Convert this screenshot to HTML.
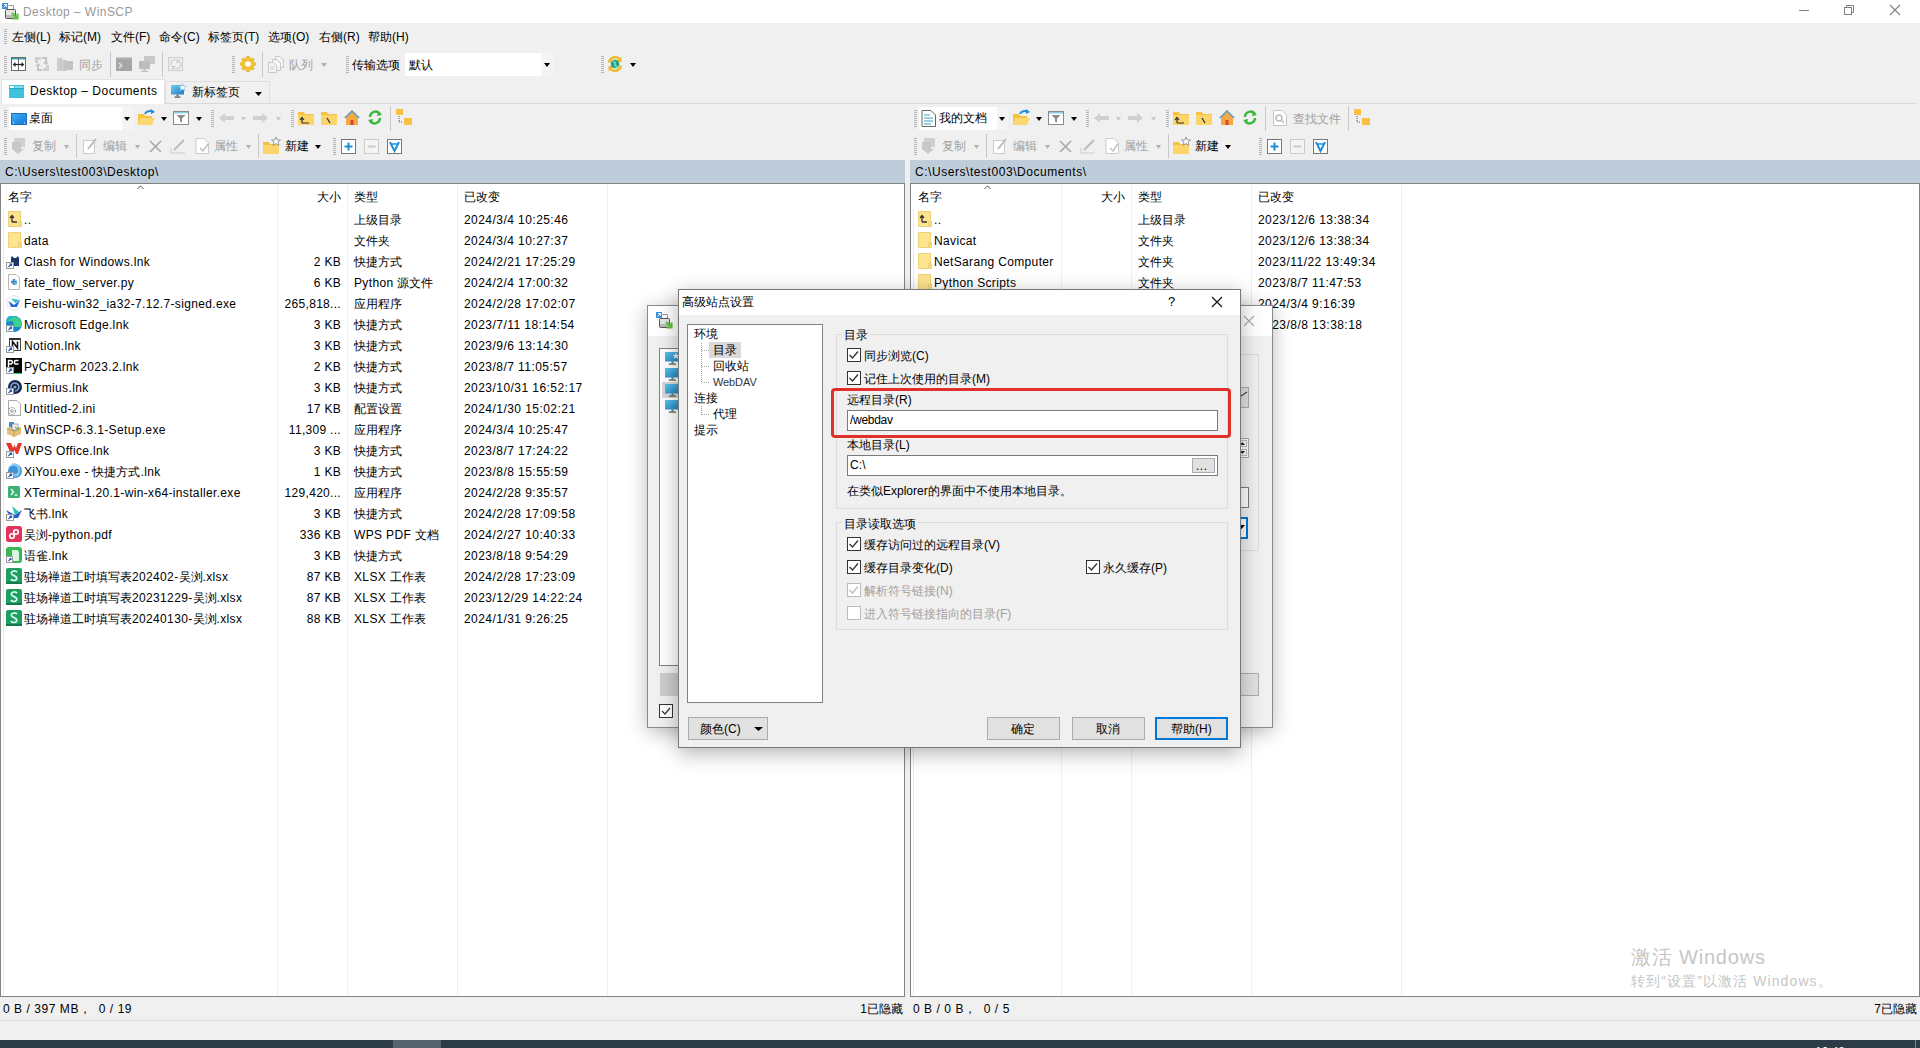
<!DOCTYPE html>
<html><head><meta charset="utf-8"><title>WinSCP</title>
<style>
html,body{margin:0;padding:0}
body{width:1920px;height:1048px;position:relative;overflow:hidden;background:#f0f0f0;font-family:"Liberation Sans",sans-serif;font-size:12px;color:#000}
.t{position:absolute;white-space:pre;line-height:16px;height:16px}
.r{position:absolute}
</style></head><body>
<div class="r" style="left:0px;top:0px;width:1920px;height:23px;background:#fff"></div>
<svg class="r" style="left:2px;top:3px" width="17" height="17" viewBox="0 0 17 17"><path d="M6.5 2.5H11.5V7.5" stroke="#999" fill="none"/><rect x="0" y="0" width="6" height="6" fill="#3d8fdb"/><path d="M1.5 4.5L4.5 1.5M2 1.5H4.5V4" stroke="#fff" stroke-width="0.9" fill="none"/><rect x="3.5" y="6.5" width="10" height="9" rx="1" fill="#e6e6e6" stroke="#555"/><rect x="4" y="12" width="9" height="3" fill="#bbb"/><path d="M10 10L15.5 15.5M15.5 10.5V15.5H10.5" stroke="#5cc23c" stroke-width="2.2" fill="none"/></svg>
<div class="t" style="left:23px;top:4.0px;color:#999;letter-spacing:0.45px;">Desktop – WinSCP</div>
<div class="r" style="left:1799px;top:10px;width:10px;height:1px;background:#808080"></div>
<svg class="r" style="left:1843px;top:4px" width="13" height="12" viewBox="0 0 13 12"><path d="M3.5 3.5V1.5H10.5V8.5H8.5" stroke="#808080" fill="none"/><rect x="1.5" y="3.5" width="7" height="7" stroke="#808080" fill="none"/></svg>
<svg class="r" style="left:1889px;top:4px" width="12" height="12" viewBox="0 0 12 12"><path d="M1 1L11 11M11 1L1 11" stroke="#808080" stroke-width="1.1"/></svg>
<div class="r" style="left:4px;top:29px;width:3px;height:15px;background:repeating-linear-gradient(#b4b4b4 0 1px,transparent 1px 2px)"></div>
<div class="t" style="left:12px;top:29.0px;color:#000;">左侧(L)</div>
<div class="t" style="left:59px;top:29.0px;color:#000;">标记(M)</div>
<div class="t" style="left:111px;top:29.0px;color:#000;">文件(F)</div>
<div class="t" style="left:159px;top:29.0px;color:#000;">命令(C)</div>
<div class="t" style="left:208px;top:29.0px;color:#000;">标签页(T)</div>
<div class="t" style="left:268px;top:29.0px;color:#000;">选项(O)</div>
<div class="t" style="left:319px;top:29.0px;color:#000;">右侧(R)</div>
<div class="t" style="left:368px;top:29.0px;color:#000;">帮助(H)</div>
<div class="r" style="left:4px;top:56px;width:3px;height:17px;background:repeating-linear-gradient(#b4b4b4 0 1px,transparent 1px 2px)"></div>
<svg class="r" style="left:11px;top:57px" width="15" height="14" viewBox="0 0 15 14"><rect x="0.5" y="0.5" width="14" height="13" fill="#fff" stroke="#6a6a6a"/><rect x="1" y="1" width="13" height="1.5" fill="#3aa6b9"/><path d="M7.5 1V13" stroke="#6a6a6a"/><path d="M2.5 7.5H12.5" stroke="#222" stroke-width="1.2"/><path d="M1.8 7.5L4.5 5V10Z M13.2 7.5L10.5 5V10Z" fill="#222"/></svg>
<svg class="r" style="left:34px;top:56px" width="16" height="16" viewBox="0 0 16 16"><path d="M1 1H7V4H4V7H1Z M15 15H9V12H12V9H15Z" fill="#cfcfcf"/><path d="M8 1H13V6H15L12 9L9 6H11V3H8Z" fill="#c4c4c4"/><path d="M8 15H3V10H1L4 7L7 10H5V13H8Z" fill="#c4c4c4"/></svg>
<svg class="r" style="left:57px;top:57px" width="16" height="15" viewBox="0 0 16 15"><path d="M0 1H5L6 3H10V14H0Z" fill="#cdcdcd"/><path d="M7 4H16V13H7Z" fill="#c4c4c4"/></svg>
<div class="t" style="left:79px;top:57.0px;color:#a0a0a0;">同步</div>
<div class="r" style="left:110px;top:52px;width:1px;height:25px;background:#c8c8c8"></div>
<svg class="r" style="left:116px;top:57px" width="16" height="14" viewBox="0 0 16 14"><rect x="0" y="0" width="16" height="14" fill="#a6a6a6"/><rect x="0" y="0" width="16" height="1.5" fill="#c6c6c6"/><path d="M3 6L6 8.5L3 11" stroke="#e8e8e8" stroke-width="1.2" fill="none"/></svg>
<svg class="r" style="left:139px;top:56px" width="16" height="16" viewBox="0 0 16 16"><rect x="5" y="0" width="11" height="8" fill="#c8c8c8"/><rect x="0" y="5" width="11" height="8" fill="#bdbdbd"/><rect x="4.5" y="13" width="2" height="1.5" fill="#bdbdbd"/><rect x="2" y="14.5" width="7" height="1.5" fill="#c4c4c4"/></svg>
<div class="r" style="left:162px;top:52px;width:1px;height:25px;background:#c8c8c8"></div>
<svg class="r" style="left:168px;top:57px" width="16" height="15" viewBox="0 0 16 15"><rect x="0.5" y="0.5" width="14" height="13" fill="none" stroke="#cfcfcf" stroke-width="1.2"/><path d="M3.5 9A4.5 4 0 0 1 11 4.5M11 2V5H8M12 5.5A4.5 4 0 0 1 4.5 10M4.5 12.5V9.5H7.5" stroke="#c8c8c8" fill="none" stroke-width="1.1"/></svg>
<div class="r" style="left:232px;top:56px;width:3px;height:17px;background:repeating-linear-gradient(#b4b4b4 0 1px,transparent 1px 2px)"></div>
<svg class="r" style="left:240px;top:56px" width="16" height="16" viewBox="0 0 16 16"><path d="M13.86 6.69 L15.69 6.68 L15.69 9.32 L13.86 9.31 L13.54 10.30 L13.07 11.21 L14.37 12.50 L12.50 14.37 L11.21 13.07 L10.30 13.54 L9.31 13.86 L9.32 15.69 L6.68 15.69 L6.69 13.86 L5.70 13.54 L4.79 13.07 L3.50 14.37 L1.63 12.50 L2.93 11.21 L2.46 10.30 L2.14 9.31 L0.31 9.32 L0.31 6.68 L2.14 6.69 L2.46 5.70 L2.93 4.79 L1.63 3.50 L3.50 1.63 L4.79 2.93 L5.70 2.46 L6.69 2.14 L6.68 0.31 L9.32 0.31 L9.31 2.14 L10.30 2.46 L11.21 2.93 L12.50 1.63 L14.37 3.50 L13.07 4.79 L13.54 5.70Z" fill="#f2c233" stroke="#e0a81c" stroke-width="0.6"/><circle cx="8" cy="8" r="2.8" fill="#fff"/></svg>
<div class="r" style="left:262px;top:52px;width:1px;height:25px;background:#c8c8c8"></div>
<svg class="r" style="left:268px;top:56px" width="16" height="17" viewBox="0 0 16 17"><path d="M7.5 0.5H12L15.5 4V11.5H7.5Z" fill="#f4f4f4" stroke="#c8c8c8"/><path d="M4.5 3.5H9L12.5 7V14.5H4.5Z" fill="#f4f4f4" stroke="#c8c8c8"/><path d="M0.5 6.5H5L8.5 10V16.5H0.5Z" fill="#f4f4f4" stroke="#c8c8c8"/><path d="M2 11H6M2 13H6" stroke="#ccc"/></svg>
<div class="t" style="left:289px;top:57.0px;color:#a0a0a0;">队列</div>
<svg class="r" style="left:321px;top:63px" width="6" height="4" viewBox="0 0 6 4"><path d="M0 0H6L3.0 4Z" fill="#b0b0b0"/></svg>
<div class="r" style="left:346px;top:56px;width:3px;height:17px;background:repeating-linear-gradient(#b4b4b4 0 1px,transparent 1px 2px)"></div>
<div class="t" style="left:352px;top:57.0px;color:#000;">传输选项</div>
<div class="r" style="left:405px;top:53px;width:148px;height:23px;background:#fff"></div>
<div class="r" style="left:541px;top:53px;width:12px;height:23px;background:#f4f4f4"></div>
<svg class="r" style="left:544px;top:63px" width="6" height="4" viewBox="0 0 6 4"><path d="M0 0H6L3.0 4Z" fill="#000"/></svg>
<div class="t" style="left:409px;top:57.0px;color:#000;">默认</div>
<div class="r" style="left:601px;top:56px;width:3px;height:17px;background:repeating-linear-gradient(#b4b4b4 0 1px,transparent 1px 2px)"></div>
<svg class="r" style="left:606px;top:55px" width="18" height="18" viewBox="0 0 18 18"><path d="M3.2 7.5A6 6 0 0 1 13.5 4.2" stroke="#f1b92e" stroke-width="2.6" fill="none"/><path d="M15.5 1.5V7H10Z" fill="#f1b92e"/><path d="M14.8 10.5A6 6 0 0 1 4.5 13.8" stroke="#f1b92e" stroke-width="2.6" fill="none"/><path d="M2.5 16.5V11H8Z" fill="#f1b92e"/><circle cx="9" cy="9" r="4.3" fill="#2aa16a"/><path d="M7 6.5Q9.5 7 9 9T11.5 12" stroke="#5fd0d8" stroke-width="2" fill="none"/></svg>
<svg class="r" style="left:630px;top:63px" width="6" height="4" viewBox="0 0 6 4"><path d="M0 0H6L3.0 4Z" fill="#000"/></svg>
<div class="r" style="left:0px;top:103px;width:1917px;height:1px;background:#d9d9d9"></div>
<div class="r" style="left:1px;top:79px;width:164px;height:25px;background:#fff;border:1px solid #e3e3e3;border-bottom:none;box-sizing:border-box"></div>
<svg class="r" style="left:9px;top:85px" width="15" height="13" viewBox="0 0 15 13"><rect x="0" y="0" width="15" height="13" fill="#3dc3dd"/><rect x="1" y="1" width="4" height="2" fill="#fff"/><rect x="6" y="1" width="8" height="2" fill="#7fdcec"/><rect x="0" y="3" width="15" height="1" fill="#2aa8c0"/></svg>
<div class="t" style="left:30px;top:83.0px;color:#000;letter-spacing:0.5px;">Desktop – Documents</div>
<div class="r" style="left:165px;top:81px;width:105px;height:22px;background:#f0f0f0;border:1px solid #dedede;border-bottom:none;box-sizing:border-box"></div>
<svg class="r" style="left:171px;top:83px" width="16" height="16" viewBox="0 0 16 16"><defs><linearGradient id="tg" x1="0" y1="0" x2="1" y2="1"><stop offset="0" stop-color="#6fd0f0"/><stop offset="1" stop-color="#1a7cc2"/></linearGradient></defs><rect x="0" y="2" width="13" height="9.5" fill="url(#tg)"/><rect x="5.5" y="11.5" width="2" height="2" fill="#666"/><rect x="3.5" y="13.5" width="6" height="1.2" fill="#555"/><path d="M11.5 0.5L12.6 3.2H15.5L13.2 5L14 7.8L11.5 6.2L9 7.8L9.8 5L7.5 3.2H10.4Z" fill="#fff" stroke="#7ab6da" stroke-width="0.6"/></svg>
<div class="t" style="left:192px;top:84.0px;color:#000;">新标签页</div>
<svg class="r" style="left:255px;top:92px" width="7" height="4" viewBox="0 0 7 4"><path d="M0 0H7L3.5 4Z" fill="#000"/></svg>
<div class="r" style="left:4px;top:110px;width:3px;height:17px;background:repeating-linear-gradient(#b4b4b4 0 1px,transparent 1px 2px)"></div>
<div class="r" style="left:9px;top:107px;width:124px;height:23px;background:#fff"></div>
<div class="r" style="left:122px;top:107px;width:11px;height:23px;background:#f4f4f4"></div>
<svg class="r" style="left:124px;top:117px" width="6" height="4" viewBox="0 0 6 4"><path d="M0 0H6L3.0 4Z" fill="#000"/></svg>
<svg class="r" style="left:11px;top:113px" width="16" height="12" viewBox="0 0 16 12"><defs><linearGradient id="dg" x1="0" y1="0" x2="1" y2="1"><stop offset="0" stop-color="#3fb0f5"/><stop offset="1" stop-color="#1477d6"/></linearGradient></defs><rect x="0.5" y="0.5" width="15" height="11" fill="url(#dg)" stroke="#1a6fc0"/><path d="M2 10H3M13 10H14" stroke="#fff"/></svg>
<div class="t" style="left:29px;top:110.0px;color:#000;">桌面</div>
<svg class="r" style="left:137px;top:109px" width="19" height="17" viewBox="0 0 19 17"><path d="M1 5H7L8 7H15V16H1Z" fill="#f5c242"/><path d="M3 9H18L15 16H1Z" fill="#fbd872"/><path d="M8 5A5 4 0 0 1 16 3" stroke="#1c8fd6" stroke-width="2" fill="none"/><path d="M14 0L18 3L14 5Z" fill="#1c8fd6"/></svg>
<svg class="r" style="left:161px;top:117px" width="6" height="4" viewBox="0 0 6 4"><path d="M0 0H6L3.0 4Z" fill="#000"/></svg>
<svg class="r" style="left:173px;top:111px" width="16" height="14" viewBox="0 0 16 14"><rect x="0.5" y="0.5" width="15" height="13" fill="#fff" stroke="#8a8a8a"/><rect x="1" y="1" width="14" height="1.5" fill="#8fd0e0"/><path d="M3.5 4H12.5L9 7.5V11.5L7 10.5V7.5Z" fill="#8a8a8a"/></svg>
<svg class="r" style="left:196px;top:117px" width="6" height="4" viewBox="0 0 6 4"><path d="M0 0H6L3.0 4Z" fill="#000"/></svg>
<div class="r" style="left:211px;top:110px;width:3px;height:17px;background:repeating-linear-gradient(#b4b4b4 0 1px,transparent 1px 2px)"></div>
<svg class="r" style="left:219px;top:113px" width="15" height="10" viewBox="0 0 15 10"><path d="M0 5L6 0V3H15V7H6V10Z" fill="#d0d0d0"/></svg>
<svg class="r" style="left:241px;top:117px" width="5" height="4" viewBox="0 0 5 4"><path d="M0 0H5L2.5 4Z" fill="#c8c8c8"/></svg>
<svg class="r" style="left:253px;top:113px" width="15" height="10" viewBox="0 0 15 10"><path d="M15 5L9 0V3H0V7H9V10Z" fill="#d0d0d0"/></svg>
<svg class="r" style="left:276px;top:117px" width="5" height="4" viewBox="0 0 5 4"><path d="M0 0H5L2.5 4Z" fill="#c8c8c8"/></svg>
<div class="r" style="left:291px;top:110px;width:3px;height:17px;background:repeating-linear-gradient(#b4b4b4 0 1px,transparent 1px 2px)"></div>
<svg class="r" style="left:298px;top:110px" width="16" height="16" viewBox="0 0 16 16"><path d="M0 2H6L7 4H16V15H0Z" fill="#f5c242"/><rect x="0" y="5" width="16" height="10" fill="#fbd46a"/><path d="M4 13V8M2 10L4 7.5L6 10M4 13H11" stroke="#333" stroke-width="1.2" fill="none"/></svg>
<svg class="r" style="left:321px;top:110px" width="16" height="16" viewBox="0 0 16 16"><path d="M0 2H6L7 4H16V15H0Z" fill="#f5c242"/><rect x="0" y="5" width="16" height="10" fill="#fbd46a"/><path d="M6 8L9 13" stroke="#333" stroke-width="1.3"/></svg>
<svg class="r" style="left:344px;top:109px" width="16" height="17" viewBox="0 0 16 17"><path d="M8 1L0 9H2V16H14V9H16Z" fill="#f5a742"/><path d="M8 1L0 9H2L8 3L14 9H16Z" fill="#5a9fd4"/><rect x="6.5" y="11" width="3" height="5" fill="#d9462e"/></svg>
<svg class="r" style="left:367px;top:109px" width="16" height="17" viewBox="0 0 16 17"><path d="M3 8A5.5 5.5 0 0 1 13 5" stroke="#3cb83c" stroke-width="2.5" fill="none"/><path d="M13 9A5.5 5.5 0 0 1 3 12" stroke="#3cb83c" stroke-width="2.5" fill="none"/><path d="M11 2L15 6L10 7Z M5 15L1 11L6 10Z" fill="#3cb83c"/></svg>
<div class="r" style="left:390px;top:106px;width:1px;height:25px;background:#c8c8c8"></div>
<svg class="r" style="left:396px;top:109px" width="17" height="17" viewBox="0 0 17 17"><rect x="0" y="0" width="7" height="6" fill="#f5c242"/><rect x="8" y="9" width="8" height="7" fill="#f5c242"/><path d="M3 7V13H7" stroke="#555" stroke-dasharray="1 1" fill="none"/></svg>
<div class="r" style="left:4px;top:138px;width:3px;height:17px;background:repeating-linear-gradient(#b4b4b4 0 1px,transparent 1px 2px)"></div>
<svg class="r" style="left:11px;top:138px" width="17" height="16" viewBox="0 0 17 16"><rect x="3" y="0" width="11" height="9" fill="#d0d0d0"/><path d="M1 4H10V11H13L7 16L1 11Z" fill="#c8c8c8"/></svg>
<div class="t" style="left:32px;top:138.0px;color:#a0a0a0;">复制</div>
<svg class="r" style="left:64px;top:145px" width="5" height="4" viewBox="0 0 5 4"><path d="M0 0H5L2.5 4Z" fill="#b0b0b0"/></svg>
<div class="r" style="left:76px;top:134px;width:1px;height:24px;background:#c8c8c8"></div>
<svg class="r" style="left:83px;top:138px" width="15" height="16" viewBox="0 0 15 16"><rect x="0.5" y="2.5" width="11" height="13" fill="#fff" stroke="#ccc"/><path d="M5 11L13 1" stroke="#bbb" stroke-width="2"/></svg>
<div class="t" style="left:103px;top:138.0px;color:#a0a0a0;">编辑</div>
<svg class="r" style="left:135px;top:145px" width="5" height="4" viewBox="0 0 5 4"><path d="M0 0H5L2.5 4Z" fill="#b0b0b0"/></svg>
<svg class="r" style="left:149px;top:140px" width="13" height="13" viewBox="0 0 13 13"><path d="M1 1L12 12M12 1L1 12" stroke="#a8a8a8" stroke-width="1.6"/></svg>
<svg class="r" style="left:170px;top:138px" width="16" height="16" viewBox="0 0 16 16"><path d="M1 10V15H15" stroke="#ccc" fill="none"/><path d="M4 12L14 2" stroke="#bbb" stroke-width="2"/></svg>
<svg class="r" style="left:195px;top:138px" width="16" height="16" viewBox="0 0 16 16"><path d="M1 0.5H9L13.5 5V15.5H1Z" fill="#fff" stroke="#ccc"/><path d="M5 10L8 13L13 6" stroke="#bbb" fill="none" stroke-width="1.3"/></svg>
<div class="t" style="left:214px;top:138.0px;color:#a0a0a0;">属性</div>
<svg class="r" style="left:246px;top:145px" width="5" height="4" viewBox="0 0 5 4"><path d="M0 0H5L2.5 4Z" fill="#b0b0b0"/></svg>
<div class="r" style="left:258px;top:134px;width:1px;height:24px;background:#c8c8c8"></div>
<svg class="r" style="left:263px;top:137px" width="18" height="17" viewBox="0 0 18 17"><path d="M0 5H6L7 7H16V17H0Z" fill="#f5c242"/><rect x="0" y="8" width="16" height="9" fill="#fbd46a"/><path d="M13 0L14.2 3H17.5L15 5L16 8.5L13 6.5L10 8.5L11 5L8.5 3H11.8Z" fill="#fff" stroke="#888" stroke-width="0.8"/></svg>
<div class="t" style="left:285px;top:138.0px;color:#000;">新建</div>
<svg class="r" style="left:315px;top:145px" width="6" height="4" viewBox="0 0 6 4"><path d="M0 0H6L3.0 4Z" fill="#000"/></svg>
<div class="r" style="left:333px;top:138px;width:3px;height:17px;background:repeating-linear-gradient(#b4b4b4 0 1px,transparent 1px 2px)"></div>
<svg class="r" style="left:341px;top:139px" width="15" height="15" viewBox="0 0 15 15"><rect x="0.5" y="0.5" width="14" height="14" fill="#fff" stroke="#777"/><path d="M7.5 3.5V11.5M3.5 7.5H11.5" stroke="#1c8fd6" stroke-width="2"/></svg>
<svg class="r" style="left:364px;top:139px" width="15" height="15" viewBox="0 0 15 15"><rect x="0.5" y="0.5" width="14" height="14" fill="#f4f4f4" stroke="#ccc"/><path d="M3.5 7.5H11.5" stroke="#ccc" stroke-width="2"/></svg>
<svg class="r" style="left:387px;top:139px" width="15" height="15" viewBox="0 0 15 15"><rect x="0.5" y="0.5" width="14" height="14" fill="#fff" stroke="#777"/><path d="M3 3L7.5 12L12 3" stroke="#1c8fd6" stroke-width="2" fill="none"/><path d="M5 5H10" stroke="#1c8fd6" stroke-width="1.5"/></svg>
<div class="r" style="left:914px;top:110px;width:3px;height:17px;background:repeating-linear-gradient(#b4b4b4 0 1px,transparent 1px 2px)"></div>
<div class="r" style="left:919px;top:107px;width:89px;height:23px;background:#fff"></div>
<div class="r" style="left:997px;top:107px;width:11px;height:23px;background:#f4f4f4"></div>
<svg class="r" style="left:999px;top:117px" width="6" height="4" viewBox="0 0 6 4"><path d="M0 0H6L3.0 4Z" fill="#000"/></svg>
<svg class="r" style="left:921px;top:110px" width="15" height="17" viewBox="0 0 15 17"><path d="M1 0.5H10L14.5 5V16.5H1Z" fill="#fff" stroke="#666"/><path d="M3 5H9M3 8H12M3 11H12M3 14H10" stroke="#3aa0c8" stroke-width="1.2"/></svg>
<div class="t" style="left:939px;top:110.0px;color:#000;">我的文档</div>
<svg class="r" style="left:1012px;top:109px" width="19" height="17" viewBox="0 0 19 17"><path d="M1 5H7L8 7H15V16H1Z" fill="#f5c242"/><path d="M3 9H18L15 16H1Z" fill="#fbd872"/><path d="M8 5A5 4 0 0 1 16 3" stroke="#1c8fd6" stroke-width="2" fill="none"/><path d="M14 0L18 3L14 5Z" fill="#1c8fd6"/></svg>
<svg class="r" style="left:1036px;top:117px" width="6" height="4" viewBox="0 0 6 4"><path d="M0 0H6L3.0 4Z" fill="#000"/></svg>
<svg class="r" style="left:1048px;top:111px" width="16" height="14" viewBox="0 0 16 14"><rect x="0.5" y="0.5" width="15" height="13" fill="#fff" stroke="#8a8a8a"/><rect x="1" y="1" width="14" height="1.5" fill="#8fd0e0"/><path d="M3.5 4H12.5L9 7.5V11.5L7 10.5V7.5Z" fill="#8a8a8a"/></svg>
<svg class="r" style="left:1071px;top:117px" width="6" height="4" viewBox="0 0 6 4"><path d="M0 0H6L3.0 4Z" fill="#000"/></svg>
<div class="r" style="left:1086px;top:110px;width:3px;height:17px;background:repeating-linear-gradient(#b4b4b4 0 1px,transparent 1px 2px)"></div>
<svg class="r" style="left:1094px;top:113px" width="15" height="10" viewBox="0 0 15 10"><path d="M0 5L6 0V3H15V7H6V10Z" fill="#d0d0d0"/></svg>
<svg class="r" style="left:1116px;top:117px" width="5" height="4" viewBox="0 0 5 4"><path d="M0 0H5L2.5 4Z" fill="#c8c8c8"/></svg>
<svg class="r" style="left:1128px;top:113px" width="15" height="10" viewBox="0 0 15 10"><path d="M15 5L9 0V3H0V7H9V10Z" fill="#d0d0d0"/></svg>
<svg class="r" style="left:1151px;top:117px" width="5" height="4" viewBox="0 0 5 4"><path d="M0 0H5L2.5 4Z" fill="#c8c8c8"/></svg>
<div class="r" style="left:1166px;top:110px;width:3px;height:17px;background:repeating-linear-gradient(#b4b4b4 0 1px,transparent 1px 2px)"></div>
<svg class="r" style="left:1173px;top:110px" width="16" height="16" viewBox="0 0 16 16"><path d="M0 2H6L7 4H16V15H0Z" fill="#f5c242"/><rect x="0" y="5" width="16" height="10" fill="#fbd46a"/><path d="M4 13V8M2 10L4 7.5L6 10M4 13H11" stroke="#333" stroke-width="1.2" fill="none"/></svg>
<svg class="r" style="left:1196px;top:110px" width="16" height="16" viewBox="0 0 16 16"><path d="M0 2H6L7 4H16V15H0Z" fill="#f5c242"/><rect x="0" y="5" width="16" height="10" fill="#fbd46a"/><path d="M6 8L9 13" stroke="#333" stroke-width="1.3"/></svg>
<svg class="r" style="left:1219px;top:109px" width="16" height="17" viewBox="0 0 16 17"><path d="M8 1L0 9H2V16H14V9H16Z" fill="#f5a742"/><path d="M8 1L0 9H2L8 3L14 9H16Z" fill="#5a9fd4"/><rect x="6.5" y="11" width="3" height="5" fill="#d9462e"/></svg>
<svg class="r" style="left:1242px;top:109px" width="16" height="17" viewBox="0 0 16 17"><path d="M3 8A5.5 5.5 0 0 1 13 5" stroke="#3cb83c" stroke-width="2.5" fill="none"/><path d="M13 9A5.5 5.5 0 0 1 3 12" stroke="#3cb83c" stroke-width="2.5" fill="none"/><path d="M11 2L15 6L10 7Z M5 15L1 11L6 10Z" fill="#3cb83c"/></svg>
<div class="r" style="left:1265px;top:106px;width:1px;height:25px;background:#c8c8c8"></div>
<svg class="r" style="left:1272px;top:110px" width="16" height="16" viewBox="0 0 16 16"><path d="M1.5 0.5H10L14.5 5V15.5H1.5Z" fill="#fff" stroke="#c4c4c4"/><circle cx="7" cy="8" r="3" fill="none" stroke="#bbb" stroke-width="1.5"/><path d="M9 10L12 13" stroke="#bbb" stroke-width="1.5"/></svg>
<div class="t" style="left:1293px;top:111.0px;color:#a0a0a0;">查找文件</div>
<div class="r" style="left:1348px;top:106px;width:1px;height:25px;background:#c8c8c8"></div>
<svg class="r" style="left:1354px;top:109px" width="17" height="17" viewBox="0 0 17 17"><rect x="0" y="0" width="7" height="6" fill="#f5c242"/><rect x="8" y="9" width="8" height="7" fill="#f5c242"/><path d="M3 7V13H7" stroke="#555" stroke-dasharray="1 1" fill="none"/></svg>
<div class="r" style="left:914px;top:138px;width:3px;height:17px;background:repeating-linear-gradient(#b4b4b4 0 1px,transparent 1px 2px)"></div>
<svg class="r" style="left:921px;top:138px" width="17" height="16" viewBox="0 0 17 16"><rect x="3" y="0" width="11" height="9" fill="#d0d0d0"/><path d="M1 4H10V11H13L7 16L1 11Z" fill="#c8c8c8"/></svg>
<div class="t" style="left:942px;top:138.0px;color:#a0a0a0;">复制</div>
<svg class="r" style="left:974px;top:145px" width="5" height="4" viewBox="0 0 5 4"><path d="M0 0H5L2.5 4Z" fill="#b0b0b0"/></svg>
<div class="r" style="left:986px;top:134px;width:1px;height:24px;background:#c8c8c8"></div>
<svg class="r" style="left:993px;top:138px" width="15" height="16" viewBox="0 0 15 16"><rect x="0.5" y="2.5" width="11" height="13" fill="#fff" stroke="#ccc"/><path d="M5 11L13 1" stroke="#bbb" stroke-width="2"/></svg>
<div class="t" style="left:1013px;top:138.0px;color:#a0a0a0;">编辑</div>
<svg class="r" style="left:1045px;top:145px" width="5" height="4" viewBox="0 0 5 4"><path d="M0 0H5L2.5 4Z" fill="#b0b0b0"/></svg>
<svg class="r" style="left:1059px;top:140px" width="13" height="13" viewBox="0 0 13 13"><path d="M1 1L12 12M12 1L1 12" stroke="#a8a8a8" stroke-width="1.6"/></svg>
<svg class="r" style="left:1080px;top:138px" width="16" height="16" viewBox="0 0 16 16"><path d="M1 10V15H15" stroke="#ccc" fill="none"/><path d="M4 12L14 2" stroke="#bbb" stroke-width="2"/></svg>
<svg class="r" style="left:1105px;top:138px" width="16" height="16" viewBox="0 0 16 16"><path d="M1 0.5H9L13.5 5V15.5H1Z" fill="#fff" stroke="#ccc"/><path d="M5 10L8 13L13 6" stroke="#bbb" fill="none" stroke-width="1.3"/></svg>
<div class="t" style="left:1124px;top:138.0px;color:#a0a0a0;">属性</div>
<svg class="r" style="left:1156px;top:145px" width="5" height="4" viewBox="0 0 5 4"><path d="M0 0H5L2.5 4Z" fill="#b0b0b0"/></svg>
<div class="r" style="left:1168px;top:134px;width:1px;height:24px;background:#c8c8c8"></div>
<svg class="r" style="left:1173px;top:137px" width="18" height="17" viewBox="0 0 18 17"><path d="M0 5H6L7 7H16V17H0Z" fill="#f5c242"/><rect x="0" y="8" width="16" height="9" fill="#fbd46a"/><path d="M13 0L14.2 3H17.5L15 5L16 8.5L13 6.5L10 8.5L11 5L8.5 3H11.8Z" fill="#fff" stroke="#888" stroke-width="0.8"/></svg>
<div class="t" style="left:1195px;top:138.0px;color:#000;">新建</div>
<svg class="r" style="left:1225px;top:145px" width="6" height="4" viewBox="0 0 6 4"><path d="M0 0H6L3.0 4Z" fill="#000"/></svg>
<div class="r" style="left:1259px;top:138px;width:3px;height:17px;background:repeating-linear-gradient(#b4b4b4 0 1px,transparent 1px 2px)"></div>
<svg class="r" style="left:1267px;top:139px" width="15" height="15" viewBox="0 0 15 15"><rect x="0.5" y="0.5" width="14" height="14" fill="#fff" stroke="#777"/><path d="M7.5 3.5V11.5M3.5 7.5H11.5" stroke="#1c8fd6" stroke-width="2"/></svg>
<svg class="r" style="left:1290px;top:139px" width="15" height="15" viewBox="0 0 15 15"><rect x="0.5" y="0.5" width="14" height="14" fill="#f4f4f4" stroke="#ccc"/><path d="M3.5 7.5H11.5" stroke="#ccc" stroke-width="2"/></svg>
<svg class="r" style="left:1313px;top:139px" width="15" height="15" viewBox="0 0 15 15"><rect x="0.5" y="0.5" width="14" height="14" fill="#fff" stroke="#777"/><path d="M3 3L7.5 12L12 3" stroke="#1c8fd6" stroke-width="2" fill="none"/><path d="M5 5H10" stroke="#1c8fd6" stroke-width="1.5"/></svg>
<div class="r" style="left:0px;top:160px;width:905px;height:23px;background:#bfcddb"></div>
<div class="t" style="left:5px;top:164.0px;color:#000;letter-spacing:0.55px;">C:\Users\test003\Desktop\</div>
<div class="r" style="left:0px;top:183px;width:905px;height:814px;background:#fff;border:1px solid #828282;box-sizing:border-box"></div>
<div class="r" style="left:277px;top:185px;width:1px;height:811px;background:#efefef"></div>
<div class="r" style="left:347px;top:185px;width:1px;height:811px;background:#efefef"></div>
<div class="r" style="left:457px;top:185px;width:1px;height:811px;background:#efefef"></div>
<div class="r" style="left:607px;top:185px;width:1px;height:811px;background:#efefef"></div>
<div class="r" style="left:3px;top:209px;width:1px;height:787px;background:#e6e9ed"></div>
<div class="t" style="left:8px;top:189.0px;color:#000;">名字</div>
<svg class="r" style="left:137px;top:185px" width="8" height="5" viewBox="0 0 8 5"><path d="M0.5 4L3.5 0.8L6.5 4" stroke="#555" stroke-width="1" fill="none"/></svg>
<div class="t" style="right:1579px;top:189.0px;color:#000;text-align:right;">大小</div>
<div class="t" style="left:354px;top:189.0px;color:#000;">类型</div>
<div class="t" style="left:464px;top:189.0px;color:#000;">已改变</div>
<svg class="r" style="left:6px;top:211px" width="16" height="16" viewBox="0 0 16 16"><path d="M2.5 0.5H14.5V15.5H2.5Z" fill="#fde38e" stroke="#ecd27a"/><path d="M12.5 10.5H15.5V15.5H12.5Z" fill="#f7d97a" stroke="#ecd27a"/><path d="M6 11V5M4 7L6 4.5L8 7M6 11H11" stroke="#333" stroke-width="1.3" fill="none"/></svg>
<div class="t" style="left:24px;top:211.5px;color:#000;letter-spacing:0.35px;">..</div>
<div class="t" style="left:354px;top:211.5px;color:#000;letter-spacing:0.35px;"><span style="letter-spacing:0">上级目录</span></div>
<div class="t" style="left:464px;top:211.5px;color:#000;letter-spacing:0.45px;">2024/3/4 10:25:46</div>
<svg class="r" style="left:6px;top:232px" width="16" height="16" viewBox="0 0 16 16"><path d="M2.5 0.5H14.5V15.5H2.5Z" fill="#fde38e" stroke="#ecd27a"/><path d="M12.5 10.5H15.5V15.5H12.5Z" fill="#f7d97a" stroke="#ecd27a"/></svg>
<div class="t" style="left:24px;top:232.5px;color:#000;letter-spacing:0.35px;">data</div>
<div class="t" style="left:354px;top:232.5px;color:#000;letter-spacing:0.35px;"><span style="letter-spacing:0">文件夹</span></div>
<div class="t" style="left:464px;top:232.5px;color:#000;letter-spacing:0.45px;">2024/3/4 10:27:37</div>
<svg class="r" style="left:6px;top:253px" width="16" height="16" viewBox="0 0 16 16"><path d="M5 5L6 3L8 5H10L12 3L13 5V13H5Z" fill="#1f3468"/><rect x="0.5" y="9.5" width="7" height="6" fill="#fff" stroke="#9a9a9a"/><path d="M2.5 14L5.5 11M3.5 11H5.5V13" stroke="#1c5fb8" stroke-width="1.2" fill="none"/></svg>
<div class="t" style="left:24px;top:253.5px;color:#000;letter-spacing:0.35px;">Clash for Windows.lnk</div>
<div class="t" style="right:1579px;top:253.5px;color:#000;text-align:right;letter-spacing:0.3px;">2 KB</div>
<div class="t" style="left:354px;top:253.5px;color:#000;letter-spacing:0.35px;"><span style="letter-spacing:0">快捷方式</span></div>
<div class="t" style="left:464px;top:253.5px;color:#000;letter-spacing:0.45px;">2024/2/21 17:25:29</div>
<svg class="r" style="left:6px;top:274px" width="16" height="16" viewBox="0 0 16 16"><path d="M2.5 0.5H10L13.5 4V15.5H2.5Z" fill="#fff" stroke="#b8b8b8"/><path d="M5 8H11M8 5V11" stroke="#4a8ac4" stroke-width="2.5"/><circle cx="9.5" cy="9.5" r="1.5" fill="#6fb6d9"/></svg>
<div class="t" style="left:24px;top:274.5px;color:#000;letter-spacing:0.35px;">fate_flow_server.py</div>
<div class="t" style="right:1579px;top:274.5px;color:#000;text-align:right;letter-spacing:0.3px;">6 KB</div>
<div class="t" style="left:354px;top:274.5px;color:#000;letter-spacing:0.35px;">Python <span style="letter-spacing:0">源文件</span></div>
<div class="t" style="left:464px;top:274.5px;color:#000;letter-spacing:0.45px;">2024/2/4 17:00:32</div>
<svg class="r" style="left:6px;top:295px" width="16" height="16" viewBox="0 0 16 16"><circle cx="8" cy="8" r="7.5" fill="#fafcff" stroke="#e6e9ee"/><path d="M2.5 6L8 10L14 5L11 12H5Z" fill="#2a6ad8"/><path d="M5 3.5L9.5 8L13.5 5Z" fill="#2bc0b5"/></svg>
<div class="t" style="left:24px;top:295.5px;color:#000;letter-spacing:0.35px;">Feishu-win32_ia32-7.12.7-signed.exe</div>
<div class="t" style="right:1579px;top:295.5px;color:#000;text-align:right;letter-spacing:0.3px;">265,818...</div>
<div class="t" style="left:354px;top:295.5px;color:#000;letter-spacing:0.35px;"><span style="letter-spacing:0">应用程序</span></div>
<div class="t" style="left:464px;top:295.5px;color:#000;letter-spacing:0.45px;">2024/2/28 17:02:07</div>
<svg class="r" style="left:6px;top:316px" width="16" height="16" viewBox="0 0 16 16"><circle cx="8" cy="8" r="8" fill="#1a86d0"/><path d="M1 7A7.5 7.5 0 0 1 15.5 6A4 4 0 0 1 15 11H9A3 3 0 0 1 8 7A4 4 0 0 0 1 7Z" fill="#3ecf8e"/><path d="M1 7A7.5 7.5 0 0 1 12 2A6 5 0 0 0 1 7Z" fill="#1fb0d8"/><rect x="0.5" y="9.5" width="7" height="6" fill="#fff" stroke="#9a9a9a"/><path d="M2.5 14L5.5 11M3.5 11H5.5V13" stroke="#1c5fb8" stroke-width="1.2" fill="none"/></svg>
<div class="t" style="left:24px;top:316.5px;color:#000;letter-spacing:0.35px;">Microsoft Edge.lnk</div>
<div class="t" style="right:1579px;top:316.5px;color:#000;text-align:right;letter-spacing:0.3px;">3 KB</div>
<div class="t" style="left:354px;top:316.5px;color:#000;letter-spacing:0.35px;"><span style="letter-spacing:0">快捷方式</span></div>
<div class="t" style="left:464px;top:316.5px;color:#000;letter-spacing:0.45px;">2023/7/11 18:14:54</div>
<svg class="r" style="left:6px;top:337px" width="16" height="16" viewBox="0 0 16 16"><rect x="3.5" y="1.5" width="11" height="12" fill="#fff" stroke="#444"/><rect x="3" y="1" width="11" height="2" fill="#333"/><path d="M6.5 11V4.5L11.5 11V4.5" stroke="#111" stroke-width="1.5" fill="none"/><rect x="0.5" y="9.5" width="7" height="6" fill="#fff" stroke="#9a9a9a"/><path d="M2.5 14L5.5 11M3.5 11H5.5V13" stroke="#1c5fb8" stroke-width="1.2" fill="none"/></svg>
<div class="t" style="left:24px;top:337.5px;color:#000;letter-spacing:0.35px;">Notion.lnk</div>
<div class="t" style="right:1579px;top:337.5px;color:#000;text-align:right;letter-spacing:0.3px;">3 KB</div>
<div class="t" style="left:354px;top:337.5px;color:#000;letter-spacing:0.35px;"><span style="letter-spacing:0">快捷方式</span></div>
<div class="t" style="left:464px;top:337.5px;color:#000;letter-spacing:0.45px;">2023/9/6 13:14:30</div>
<svg class="r" style="left:6px;top:358px" width="16" height="16" viewBox="0 0 16 16"><rect x="0" y="0" width="16" height="16" fill="#050505"/><path d="M2.5 9V2.5H5A1.8 1.8 0 0 1 5 6H2.5M12.5 2.5H9.5A1 1 0 0 0 8.5 3.5V5A1 1 0 0 0 9.5 6H12.5" stroke="#fff" stroke-width="1.5" fill="none"/><rect x="0" y="15" width="16" height="1" fill="#21d789"/><rect x="0.5" y="9.5" width="7" height="6" fill="#fff" stroke="#9a9a9a"/><path d="M2.5 14L5.5 11M3.5 11H5.5V13" stroke="#1c5fb8" stroke-width="1.2" fill="none"/></svg>
<div class="t" style="left:24px;top:358.5px;color:#000;letter-spacing:0.35px;">PyCharm 2023.2.lnk</div>
<div class="t" style="right:1579px;top:358.5px;color:#000;text-align:right;letter-spacing:0.3px;">2 KB</div>
<div class="t" style="left:354px;top:358.5px;color:#000;letter-spacing:0.35px;"><span style="letter-spacing:0">快捷方式</span></div>
<div class="t" style="left:464px;top:358.5px;color:#000;letter-spacing:0.45px;">2023/8/7 11:05:57</div>
<svg class="r" style="left:6px;top:379px" width="16" height="16" viewBox="0 0 16 16"><circle cx="9" cy="8" r="7" fill="#13284f"/><path d="M5 9A4 4 0 1 1 9 12" stroke="#8aa4c8" stroke-width="1.5" fill="none"/><circle cx="9" cy="8" r="1.5" fill="#8aa4c8"/><rect x="0.5" y="9.5" width="7" height="6" fill="#fff" stroke="#9a9a9a"/><path d="M2.5 14L5.5 11M3.5 11H5.5V13" stroke="#1c5fb8" stroke-width="1.2" fill="none"/></svg>
<div class="t" style="left:24px;top:379.5px;color:#000;letter-spacing:0.35px;">Termius.lnk</div>
<div class="t" style="right:1579px;top:379.5px;color:#000;text-align:right;letter-spacing:0.3px;">3 KB</div>
<div class="t" style="left:354px;top:379.5px;color:#000;letter-spacing:0.35px;"><span style="letter-spacing:0">快捷方式</span></div>
<div class="t" style="left:464px;top:379.5px;color:#000;letter-spacing:0.45px;">2023/10/31 16:52:17</div>
<svg class="r" style="left:6px;top:400px" width="16" height="16" viewBox="0 0 16 16"><path d="M2.5 0.5H11L14.5 4V15.5H2.5Z" fill="#fff" stroke="#aaa"/><circle cx="6" cy="11" r="3.5" fill="#fff" stroke="#999" stroke-width="1.2" stroke-dasharray="1.5 1"/><circle cx="6" cy="11" r="1.3" fill="none" stroke="#999"/></svg>
<div class="t" style="left:24px;top:400.5px;color:#000;letter-spacing:0.35px;">Untitled-2.ini</div>
<div class="t" style="right:1579px;top:400.5px;color:#000;text-align:right;letter-spacing:0.3px;">17 KB</div>
<div class="t" style="left:354px;top:400.5px;color:#000;letter-spacing:0.35px;"><span style="letter-spacing:0">配置设置</span></div>
<div class="t" style="left:464px;top:400.5px;color:#000;letter-spacing:0.45px;">2024/1/30 15:02:21</div>
<svg class="r" style="left:6px;top:421px" width="16" height="16" viewBox="0 0 16 16"><path d="M1 7L8 4L15 7V13L8 16L1 13Z" fill="#e3c27d"/><path d="M1 7L8 10L15 7" stroke="#c7a053" fill="none"/><path d="M8 10V16" stroke="#c7a053"/><rect x="3" y="1" width="5" height="5" fill="#3f8fd4"/><rect x="6" y="3" width="6" height="6" fill="#eee" stroke="#777" stroke-width="0.6"/><path d="M9 6L13 9" stroke="#5cb85c" stroke-width="1.5"/></svg>
<div class="t" style="left:24px;top:421.5px;color:#000;letter-spacing:0.35px;">WinSCP-6.3.1-Setup.exe</div>
<div class="t" style="right:1579px;top:421.5px;color:#000;text-align:right;letter-spacing:0.3px;">11,309 ...</div>
<div class="t" style="left:354px;top:421.5px;color:#000;letter-spacing:0.35px;"><span style="letter-spacing:0">应用程序</span></div>
<div class="t" style="left:464px;top:421.5px;color:#000;letter-spacing:0.45px;">2024/3/4 10:25:47</div>
<svg class="r" style="left:6px;top:442px" width="16" height="16" viewBox="0 0 16 16"><path d="M0 1H5L7 6L8.5 3L10 6L12 1H16L12 12H10L8.5 8L7 12H5Z" fill="#e5382d"/><rect x="0.5" y="9.5" width="7" height="6" fill="#fff" stroke="#9a9a9a"/><path d="M2.5 14L5.5 11M3.5 11H5.5V13" stroke="#1c5fb8" stroke-width="1.2" fill="none"/></svg>
<div class="t" style="left:24px;top:442.5px;color:#000;letter-spacing:0.35px;">WPS Office.lnk</div>
<div class="t" style="right:1579px;top:442.5px;color:#000;text-align:right;letter-spacing:0.3px;">3 KB</div>
<div class="t" style="left:354px;top:442.5px;color:#000;letter-spacing:0.35px;"><span style="letter-spacing:0">快捷方式</span></div>
<div class="t" style="left:464px;top:442.5px;color:#000;letter-spacing:0.45px;">2023/8/7 17:24:22</div>
<svg class="r" style="left:6px;top:463px" width="16" height="16" viewBox="0 0 16 16"><circle cx="9" cy="8" r="7" fill="#3c93d8"/><path d="M6 2A5 5 0 0 1 13 7A4 4 0 0 1 8 12" stroke="#8cc8f0" stroke-width="2.5" fill="none"/><path d="M2 5A7 7 0 0 1 6 1.5" stroke="#cfe6f7" stroke-width="1.5" fill="none"/><rect x="0.5" y="9.5" width="7" height="6" fill="#fff" stroke="#9a9a9a"/><path d="M2.5 14L5.5 11M3.5 11H5.5V13" stroke="#1c5fb8" stroke-width="1.2" fill="none"/></svg>
<div class="t" style="left:24px;top:463.5px;color:#000;letter-spacing:0.35px;">XiYou.exe - <span style="letter-spacing:0">快捷方式</span>.lnk</div>
<div class="t" style="right:1579px;top:463.5px;color:#000;text-align:right;letter-spacing:0.3px;">1 KB</div>
<div class="t" style="left:354px;top:463.5px;color:#000;letter-spacing:0.35px;"><span style="letter-spacing:0">快捷方式</span></div>
<div class="t" style="left:464px;top:463.5px;color:#000;letter-spacing:0.45px;">2023/8/8 15:55:59</div>
<svg class="r" style="left:6px;top:484px" width="16" height="16" viewBox="0 0 16 16"><rect x="2" y="2" width="12" height="12" rx="1.5" fill="#3caf72"/><path d="M5 5L7.5 8L5 11M8.5 11H11.5" stroke="#e8fff0" stroke-width="1.4" fill="none"/></svg>
<div class="t" style="left:24px;top:484.5px;color:#000;letter-spacing:0.35px;">XTerminal-1.20.1-win-x64-installer.exe</div>
<div class="t" style="right:1579px;top:484.5px;color:#000;text-align:right;letter-spacing:0.3px;">129,420...</div>
<div class="t" style="left:354px;top:484.5px;color:#000;letter-spacing:0.35px;"><span style="letter-spacing:0">应用程序</span></div>
<div class="t" style="left:464px;top:484.5px;color:#000;letter-spacing:0.45px;">2024/2/28 9:35:57</div>
<svg class="r" style="left:6px;top:505px" width="16" height="16" viewBox="0 0 16 16"><path d="M6 1L13 7L9 10Z" fill="#24c6b3"/><path d="M0 5L9 10L16 5L12 13H5Z" fill="#2a5fd0"/><rect x="0.5" y="9.5" width="7" height="6" fill="#fff" stroke="#9a9a9a"/><path d="M2.5 14L5.5 11M3.5 11H5.5V13" stroke="#1c5fb8" stroke-width="1.2" fill="none"/></svg>
<div class="t" style="left:24px;top:505.5px;color:#000;letter-spacing:0.35px;"><span style="letter-spacing:0">飞书</span>.lnk</div>
<div class="t" style="right:1579px;top:505.5px;color:#000;text-align:right;letter-spacing:0.3px;">3 KB</div>
<div class="t" style="left:354px;top:505.5px;color:#000;letter-spacing:0.35px;"><span style="letter-spacing:0">快捷方式</span></div>
<div class="t" style="left:464px;top:505.5px;color:#000;letter-spacing:0.45px;">2024/2/28 17:09:58</div>
<svg class="r" style="left:6px;top:526px" width="16" height="16" viewBox="0 0 16 16"><rect x="0" y="0" width="16" height="16" rx="2.5" fill="#e3335a"/><circle cx="6" cy="10" r="2.3" fill="none" stroke="#fff" stroke-width="1.6"/><circle cx="10" cy="6" r="2.3" fill="none" stroke="#fff" stroke-width="1.6"/></svg>
<div class="t" style="left:24px;top:526.5px;color:#000;letter-spacing:0.35px;"><span style="letter-spacing:0">吴浏</span>-python.pdf</div>
<div class="t" style="right:1579px;top:526.5px;color:#000;text-align:right;letter-spacing:0.3px;">336 KB</div>
<div class="t" style="left:354px;top:526.5px;color:#000;letter-spacing:0.35px;">WPS PDF <span style="letter-spacing:0">文档</span></div>
<div class="t" style="left:464px;top:526.5px;color:#000;letter-spacing:0.45px;">2024/2/27 10:40:33</div>
<svg class="r" style="left:6px;top:547px" width="16" height="16" viewBox="0 0 16 16"><rect x="0" y="0" width="16" height="16" rx="3" fill="#35b852"/><path d="M6 3H10A3 3 0 0 1 13 6V14H6Z" fill="#dff5e4"/><rect x="0.5" y="9.5" width="6" height="6" fill="#fff" stroke="#9a9a9a"/><path d="M2.5 14L5 11.5M3.5 11.5H5V13" stroke="#1c5fb8" stroke-width="1.1" fill="none"/></svg>
<div class="t" style="left:24px;top:547.5px;color:#000;letter-spacing:0.35px;"><span style="letter-spacing:0">语雀</span>.lnk</div>
<div class="t" style="right:1579px;top:547.5px;color:#000;text-align:right;letter-spacing:0.3px;">3 KB</div>
<div class="t" style="left:354px;top:547.5px;color:#000;letter-spacing:0.35px;"><span style="letter-spacing:0">快捷方式</span></div>
<div class="t" style="left:464px;top:547.5px;color:#000;letter-spacing:0.45px;">2023/8/18 9:54:29</div>
<svg class="r" style="left:6px;top:568px" width="16" height="16" viewBox="0 0 16 16"><rect x="0" y="0" width="16" height="16" rx="2" fill="#1e9e62"/><rect x="0" y="14" width="16" height="2" fill="#157a4a"/><path d="M11 4.3A3 2.3 0 0 0 5.3 5C5.3 8 10.8 7.2 10.8 10.2A3 2.3 0 0 1 5 11" stroke="#d8fbe8" stroke-width="1.7" fill="none"/></svg>
<div class="t" style="left:24px;top:568.5px;color:#000;letter-spacing:0.35px;"><span style="letter-spacing:0">驻场禅道工时填写表</span>202402-<span style="letter-spacing:0">吴浏</span>.xlsx</div>
<div class="t" style="right:1579px;top:568.5px;color:#000;text-align:right;letter-spacing:0.3px;">87 KB</div>
<div class="t" style="left:354px;top:568.5px;color:#000;letter-spacing:0.35px;">XLSX <span style="letter-spacing:0">工作表</span></div>
<div class="t" style="left:464px;top:568.5px;color:#000;letter-spacing:0.45px;">2024/2/28 17:23:09</div>
<svg class="r" style="left:6px;top:589px" width="16" height="16" viewBox="0 0 16 16"><rect x="0" y="0" width="16" height="16" rx="2" fill="#1e9e62"/><rect x="0" y="14" width="16" height="2" fill="#157a4a"/><path d="M11 4.3A3 2.3 0 0 0 5.3 5C5.3 8 10.8 7.2 10.8 10.2A3 2.3 0 0 1 5 11" stroke="#d8fbe8" stroke-width="1.7" fill="none"/></svg>
<div class="t" style="left:24px;top:589.5px;color:#000;letter-spacing:0.35px;"><span style="letter-spacing:0">驻场禅道工时填写表</span>20231229-<span style="letter-spacing:0">吴浏</span>.xlsx</div>
<div class="t" style="right:1579px;top:589.5px;color:#000;text-align:right;letter-spacing:0.3px;">87 KB</div>
<div class="t" style="left:354px;top:589.5px;color:#000;letter-spacing:0.35px;">XLSX <span style="letter-spacing:0">工作表</span></div>
<div class="t" style="left:464px;top:589.5px;color:#000;letter-spacing:0.45px;">2023/12/29 14:22:24</div>
<svg class="r" style="left:6px;top:610px" width="16" height="16" viewBox="0 0 16 16"><rect x="0" y="0" width="16" height="16" rx="2" fill="#1e9e62"/><rect x="0" y="14" width="16" height="2" fill="#157a4a"/><path d="M11 4.3A3 2.3 0 0 0 5.3 5C5.3 8 10.8 7.2 10.8 10.2A3 2.3 0 0 1 5 11" stroke="#d8fbe8" stroke-width="1.7" fill="none"/></svg>
<div class="t" style="left:24px;top:610.5px;color:#000;letter-spacing:0.35px;"><span style="letter-spacing:0">驻场禅道工时填写表</span>20240130-<span style="letter-spacing:0">吴浏</span>.xlsx</div>
<div class="t" style="right:1579px;top:610.5px;color:#000;text-align:right;letter-spacing:0.3px;">88 KB</div>
<div class="t" style="left:354px;top:610.5px;color:#000;letter-spacing:0.35px;">XLSX <span style="letter-spacing:0">工作表</span></div>
<div class="t" style="left:464px;top:610.5px;color:#000;letter-spacing:0.45px;">2024/1/31 9:26:25</div>
<div class="r" style="left:910px;top:160px;width:1010px;height:23px;background:#bfcddb"></div>
<div class="t" style="left:915px;top:164.0px;color:#000;letter-spacing:0.55px;">C:\Users\test003\Documents\</div>
<div class="r" style="left:910px;top:183px;width:1010px;height:814px;background:#fff;border:1px solid #828282;box-sizing:border-box"></div>
<div class="r" style="left:1061px;top:185px;width:1px;height:811px;background:#efefef"></div>
<div class="r" style="left:1131px;top:185px;width:1px;height:811px;background:#efefef"></div>
<div class="r" style="left:1251px;top:185px;width:1px;height:811px;background:#efefef"></div>
<div class="r" style="left:1401px;top:185px;width:1px;height:811px;background:#efefef"></div>
<div class="r" style="left:913px;top:209px;width:1px;height:787px;background:#e6e9ed"></div>
<div class="t" style="left:918px;top:189.0px;color:#000;">名字</div>
<svg class="r" style="left:984px;top:185px" width="8" height="5" viewBox="0 0 8 5"><path d="M0.5 4L3.5 0.8L6.5 4" stroke="#555" stroke-width="1" fill="none"/></svg>
<div class="t" style="right:795px;top:189.0px;color:#000;text-align:right;">大小</div>
<div class="t" style="left:1138px;top:189.0px;color:#000;">类型</div>
<div class="t" style="left:1258px;top:189.0px;color:#000;">已改变</div>
<svg class="r" style="left:916px;top:211px" width="16" height="16" viewBox="0 0 16 16"><path d="M2.5 0.5H14.5V15.5H2.5Z" fill="#fde38e" stroke="#ecd27a"/><path d="M12.5 10.5H15.5V15.5H12.5Z" fill="#f7d97a" stroke="#ecd27a"/><path d="M6 11V5M4 7L6 4.5L8 7M6 11H11" stroke="#333" stroke-width="1.3" fill="none"/></svg>
<div class="t" style="left:934px;top:211.5px;color:#000;letter-spacing:0.35px;">..</div>
<div class="t" style="left:1138px;top:211.5px;color:#000;letter-spacing:0.35px;"><span style="letter-spacing:0">上级目录</span></div>
<div class="t" style="left:1258px;top:211.5px;color:#000;letter-spacing:0.45px;">2023/12/6 13:38:34</div>
<svg class="r" style="left:916px;top:232px" width="16" height="16" viewBox="0 0 16 16"><path d="M2.5 0.5H14.5V15.5H2.5Z" fill="#fde38e" stroke="#ecd27a"/><path d="M12.5 10.5H15.5V15.5H12.5Z" fill="#f7d97a" stroke="#ecd27a"/></svg>
<div class="t" style="left:934px;top:232.5px;color:#000;letter-spacing:0.35px;">Navicat</div>
<div class="t" style="left:1138px;top:232.5px;color:#000;letter-spacing:0.35px;"><span style="letter-spacing:0">文件夹</span></div>
<div class="t" style="left:1258px;top:232.5px;color:#000;letter-spacing:0.45px;">2023/12/6 13:38:34</div>
<svg class="r" style="left:916px;top:253px" width="16" height="16" viewBox="0 0 16 16"><path d="M2.5 0.5H14.5V15.5H2.5Z" fill="#fde38e" stroke="#ecd27a"/><path d="M12.5 10.5H15.5V15.5H12.5Z" fill="#f7d97a" stroke="#ecd27a"/></svg>
<div class="t" style="left:934px;top:253.5px;color:#000;letter-spacing:0.35px;">NetSarang Computer</div>
<div class="t" style="left:1138px;top:253.5px;color:#000;letter-spacing:0.35px;"><span style="letter-spacing:0">文件夹</span></div>
<div class="t" style="left:1258px;top:253.5px;color:#000;letter-spacing:0.45px;">2023/11/22 13:49:34</div>
<svg class="r" style="left:916px;top:274px" width="16" height="16" viewBox="0 0 16 16"><path d="M2.5 0.5H14.5V15.5H2.5Z" fill="#fde38e" stroke="#ecd27a"/><path d="M12.5 10.5H15.5V15.5H12.5Z" fill="#f7d97a" stroke="#ecd27a"/></svg>
<div class="t" style="left:934px;top:274.5px;color:#000;letter-spacing:0.35px;">Python Scripts</div>
<div class="t" style="left:1138px;top:274.5px;color:#000;letter-spacing:0.35px;"><span style="letter-spacing:0">文件夹</span></div>
<div class="t" style="left:1258px;top:274.5px;color:#000;letter-spacing:0.45px;">2023/8/7 11:47:53</div>
<svg class="r" style="left:916px;top:295px" width="16" height="16" viewBox="0 0 16 16"><path d="M2.5 0.5H14.5V15.5H2.5Z" fill="#fde38e" stroke="#ecd27a"/><path d="M12.5 10.5H15.5V15.5H12.5Z" fill="#f7d97a" stroke="#ecd27a"/></svg>
<div class="t" style="left:934px;top:295.5px;color:#000;letter-spacing:0.35px;"></div>
<div class="t" style="left:1138px;top:295.5px;color:#000;letter-spacing:0.35px;"><span style="letter-spacing:0">文件夹</span></div>
<div class="t" style="left:1258px;top:295.5px;color:#000;letter-spacing:0.45px;">2024/3/4 9:16:39</div>
<svg class="r" style="left:916px;top:316px" width="16" height="16" viewBox="0 0 16 16"><path d="M2.5 0.5H14.5V15.5H2.5Z" fill="#fde38e" stroke="#ecd27a"/><path d="M12.5 10.5H15.5V15.5H12.5Z" fill="#f7d97a" stroke="#ecd27a"/></svg>
<div class="t" style="left:934px;top:316.5px;color:#000;letter-spacing:0.35px;"></div>
<div class="t" style="left:1138px;top:316.5px;color:#000;letter-spacing:0.35px;"><span style="letter-spacing:0">文件夹</span></div>
<div class="t" style="left:1258px;top:316.5px;color:#000;letter-spacing:0.45px;">2023/8/8 13:38:18</div>
<div class="t" style="left:1631px;top:948.8px;color:#c6c6c6;font-size:20px;letter-spacing:0.8px;">激活 Windows</div>
<div class="t" style="left:1631px;top:973.2px;color:#c6c6c6;font-size:14px;letter-spacing:1.1px;">转到“设置”以激活 Windows。</div>
<div class="t" style="left:3px;top:1001.0px;color:#000;letter-spacing:0.55px;">0 B / 397 MB<span style="letter-spacing:0">，</span>  0 / 19</div>
<div class="t" style="right:1017px;top:1001.0px;color:#000;text-align:right;">1已隐藏</div>
<div class="t" style="left:913px;top:1001.0px;color:#000;letter-spacing:0.55px;">0 B / 0 B<span style="letter-spacing:0">，</span>  0 / 5</div>
<div class="t" style="right:3px;top:1001.0px;color:#000;text-align:right;">7已隐藏</div>
<div class="r" style="left:0px;top:1020px;width:1920px;height:1px;background:#dcdcdc"></div>
<div class="r" style="left:0px;top:1040px;width:1920px;height:8px;background:#2b3c46"></div>
<div class="r" style="left:393px;top:1040px;width:48px;height:8px;background:#56656d"></div>
<div class="r" style="left:1915px;top:1040px;width:1px;height:8px;background:#7a8890"></div>
<div class="t" style="left:1815px;top:1044.0px;color:#fff;">10:48</div>
<div class="r" style="left:647px;top:305px;width:626px;height:423px;background:#f0f0f0;border:1px solid #8a8a8a;box-sizing:border-box;box-shadow:0 4px 18px rgba(0,0,0,0.28)"></div>
<div class="r" style="left:648px;top:306px;width:624px;height:30px;background:#fff"></div>
<svg class="r" style="left:656px;top:312px" width="17" height="17" viewBox="0 0 17 17"><path d="M6.5 2.5H11.5V7.5" stroke="#999" fill="none"/><rect x="0" y="0" width="6" height="6" fill="#3d8fdb"/><path d="M1.5 4.5L4.5 1.5M2 1.5H4.5V4" stroke="#fff" stroke-width="0.9" fill="none"/><rect x="3.5" y="6.5" width="10" height="9" rx="1" fill="#e6e6e6" stroke="#555"/><rect x="4" y="12" width="9" height="3" fill="#bbb"/><path d="M10 10L15.5 15.5M15.5 10.5V15.5H10.5" stroke="#5cc23c" stroke-width="2.2" fill="none"/></svg>
<svg class="r" style="left:1243px;top:315px" width="12" height="12" viewBox="0 0 12 12"><path d="M1 1L11 11M11 1L1 11" stroke="#aaa" stroke-width="1.1"/></svg>
<div class="r" style="left:659px;top:348px;width:30px;height:318px;background:#fff;border:1px solid #828282;box-sizing:border-box"></div>
<div class="r" style="left:662px;top:382px;width:18px;height:16px;background:#d9d9d9"></div>
<svg class="r" style="left:665px;top:352px" width="15" height="14" viewBox="0 0 15 14"><defs><linearGradient id="mg0" x1="0" y1="0" x2="1" y2="1"><stop offset="0" stop-color="#5ec6ee"/><stop offset="1" stop-color="#1b7fc4"/></linearGradient></defs><rect x="0" y="0" width="15" height="9.5" fill="url(#mg0)"/><rect x="6.5" y="9.5" width="2" height="2" fill="#666"/><rect x="4" y="11.5" width="7" height="1.2" fill="#555"/><path d="M11 0.5L12 3H14.5L12.5 4.5L13.3 7L11 5.5L8.7 7L9.5 4.5L7.5 3H10Z" fill="#eee"/></svg>
<svg class="r" style="left:665px;top:368px" width="15" height="14" viewBox="0 0 15 14"><defs><linearGradient id="mg1" x1="0" y1="0" x2="1" y2="1"><stop offset="0" stop-color="#5ec6ee"/><stop offset="1" stop-color="#1b7fc4"/></linearGradient></defs><rect x="0" y="0" width="15" height="9.5" fill="url(#mg1)"/><rect x="6.5" y="9.5" width="2" height="2" fill="#666"/><rect x="4" y="11.5" width="7" height="1.2" fill="#555"/></svg>
<svg class="r" style="left:665px;top:384px" width="15" height="14" viewBox="0 0 15 14"><defs><linearGradient id="mg2" x1="0" y1="0" x2="1" y2="1"><stop offset="0" stop-color="#5ec6ee"/><stop offset="1" stop-color="#1b7fc4"/></linearGradient></defs><rect x="0" y="0" width="15" height="9.5" fill="url(#mg2)"/><rect x="6.5" y="9.5" width="2" height="2" fill="#666"/><rect x="4" y="11.5" width="7" height="1.2" fill="#555"/></svg>
<svg class="r" style="left:665px;top:400px" width="15" height="14" viewBox="0 0 15 14"><defs><linearGradient id="mg3" x1="0" y1="0" x2="1" y2="1"><stop offset="0" stop-color="#5ec6ee"/><stop offset="1" stop-color="#1b7fc4"/></linearGradient></defs><rect x="0" y="0" width="15" height="9.5" fill="url(#mg3)"/><rect x="6.5" y="9.5" width="2" height="2" fill="#666"/><rect x="4" y="11.5" width="7" height="1.2" fill="#555"/></svg>
<div class="r" style="left:660px;top:673px;width:40px;height:23px;background:#cccccc"></div>
<svg class="r" style="left:659px;top:704px" width="15" height="15" viewBox="0 0 15 15"><rect x="0.5" y="0.5" width="13" height="13" fill="#fff" stroke="#333"/><path d="M3 7L6 10L11 4" stroke="#333" stroke-width="1.2" fill="none"/></svg>
<div class="r" style="left:1200px;top:354px;width:59px;height:197px;border:1px solid #dcdcdc;box-sizing:border-box"></div>
<div class="r" style="left:1220px;top:387px;width:29px;height:21px;background:#e1e1e1;border:1px solid #adadad;box-sizing:border-box"></div>
<svg class="r" style="left:1240px;top:391px" width="8" height="8" viewBox="0 0 8 8"><path d="M1 5L7 1" stroke="#444" stroke-width="1.2"/></svg>
<div class="r" style="left:1220px;top:438px;width:29px;height:20px;background:#fff;border:1px solid #adadad;box-sizing:border-box"></div>
<div class="r" style="left:1238px;top:440px;width:9px;height:7px;border:1px solid #bbb;box-sizing:border-box"></div>
<div class="r" style="left:1238px;top:449px;width:9px;height:7px;border:1px solid #bbb;box-sizing:border-box"></div>
<svg class="r" style="left:1240px;top:442px" width="5" height="3" viewBox="0 0 5 3"><path d="M0 3L2.5 0L5 3Z" fill="#222"/></svg>
<svg class="r" style="left:1240px;top:451px" width="5" height="3" viewBox="0 0 5 3"><path d="M0 0L2.5 3L5 0Z" fill="#222"/></svg>
<div class="r" style="left:1220px;top:487px;width:29px;height:21px;background:#fff;border:1px solid #7a7a7a;box-sizing:border-box"></div>
<div class="r" style="left:1220px;top:517px;width:28px;height:22px;background:#fff;border:2px solid #0078d7;box-sizing:border-box"></div>
<svg class="r" style="left:1238px;top:525px" width="7" height="4" viewBox="0 0 7 4"><path d="M0 0H7L3.5 4Z" fill="#000"/></svg>
<div class="r" style="left:1220px;top:673px;width:39px;height:23px;background:#e1e1e1;border:1px solid #adadad;box-sizing:border-box"></div>
<div class="r" style="left:678px;top:289px;width:563px;height:459px;background:#f0f0f0;border:1px solid #777;box-sizing:border-box;box-shadow:0 5px 20px rgba(0,0,0,0.3)"></div>
<div class="r" style="left:679px;top:290px;width:561px;height:25px;background:#fff"></div>
<div class="t" style="left:682px;top:294.0px;color:#000;">高级站点设置</div>
<div class="t" style="left:1168px;top:294.1px;color:#000;font-size:13px;">?</div>
<svg class="r" style="left:1211px;top:296px" width="12" height="12" viewBox="0 0 12 12"><path d="M1 1L11 11M11 1L1 11" stroke="#111" stroke-width="1.2"/></svg>
<div class="r" style="left:687px;top:324px;width:136px;height:379px;background:#fff;border:1px solid #828282;box-sizing:border-box"></div>
<div class="t" style="left:694px;top:326.0px;color:#000;">环境</div>
<div class="r" style="left:709px;top:342px;width:32px;height:16px;background:#d9d9d9"></div>
<div class="t" style="left:713px;top:342.0px;color:#000;">目录</div>
<div class="t" style="left:713px;top:358.0px;color:#000;">回收站</div>
<div class="t" style="left:713px;top:374.4px;color:#333;font-size:11px;letter-spacing:-0.1px;">WebDAV</div>
<div class="t" style="left:694px;top:390.0px;color:#000;">连接</div>
<div class="t" style="left:713px;top:406.0px;color:#000;">代理</div>
<div class="t" style="left:694px;top:422.0px;color:#000;">提示</div>
<div class="r" style="left:701px;top:343px;width:1px;height:40px;background:repeating-linear-gradient(#a0a0a0 0 1px,transparent 1px 2px)"></div>
<div class="r" style="left:702px;top:350px;width:8px;height:1px;background:repeating-linear-gradient(90deg,#a0a0a0 0 1px,transparent 1px 2px)"></div>
<div class="r" style="left:702px;top:366px;width:8px;height:1px;background:repeating-linear-gradient(90deg,#a0a0a0 0 1px,transparent 1px 2px)"></div>
<div class="r" style="left:702px;top:382px;width:8px;height:1px;background:repeating-linear-gradient(90deg,#a0a0a0 0 1px,transparent 1px 2px)"></div>
<div class="r" style="left:701px;top:406px;width:1px;height:9px;background:repeating-linear-gradient(#a0a0a0 0 1px,transparent 1px 2px)"></div>
<div class="r" style="left:702px;top:414px;width:8px;height:1px;background:repeating-linear-gradient(90deg,#a0a0a0 0 1px,transparent 1px 2px)"></div>
<div class="r" style="left:836px;top:334px;width:392px;height:175px;border:1px solid #dcdcdc;box-sizing:border-box"></div>
<div class="r" style="left:842px;top:326px;width:28px;height:14px;background:#f0f0f0"></div>
<div class="t" style="left:844px;top:327.0px;color:#000;">目录</div>
<svg class="r" style="left:847px;top:348px" width="14" height="14" viewBox="0 0 14 14"><rect x="0.5" y="0.5" width="13" height="13" fill="#fff" stroke="#333"/><path d="M2.5 7L5.5 10L11 3.5" stroke="#333" stroke-width="1.3" fill="none"/></svg>
<div class="t" style="left:864px;top:348.0px;color:#000;">同步浏览(C)</div>
<svg class="r" style="left:847px;top:371px" width="14" height="14" viewBox="0 0 14 14"><rect x="0.5" y="0.5" width="13" height="13" fill="#fff" stroke="#333"/><path d="M2.5 7L5.5 10L11 3.5" stroke="#333" stroke-width="1.3" fill="none"/></svg>
<div class="t" style="left:864px;top:371.0px;color:#000;">记住上次使用的目录(M)</div>
<div class="r" style="left:831px;top:388px;width:400px;height:50px;border:3px solid #e0302a;border-radius:4px;box-sizing:border-box"></div>
<div class="t" style="left:847px;top:392.0px;color:#000;">远程目录(R)</div>
<div class="r" style="left:847px;top:410px;width:371px;height:21px;background:#fff;border:1px solid #7a7a7a;box-sizing:border-box"></div>
<div class="t" style="left:850px;top:412.0px;color:#000;letter-spacing:-0.3px;">/webdav</div>
<div class="t" style="left:847px;top:437.0px;color:#000;">本地目录(L)</div>
<div class="r" style="left:847px;top:455px;width:371px;height:21px;background:#fff;border:1px solid #7a7a7a;box-sizing:border-box"></div>
<div class="t" style="left:850px;top:457.0px;color:#000;letter-spacing:0.1px;">C:\</div>
<div class="r" style="left:1192px;top:458px;width:23px;height:15px;background:#e1e1e1;border:1px solid #adadad;box-sizing:border-box"></div>
<div class="t" style="left:1196px;top:458.0px;color:#000;letter-spacing:0.5px;">...</div>
<div class="t" style="left:847px;top:483.0px;color:#000;">在类似Explorer的界面中不使用本地目录。</div>
<div class="r" style="left:836px;top:522px;width:392px;height:108px;border:1px solid #dcdcdc;box-sizing:border-box"></div>
<div class="r" style="left:842px;top:515px;width:76px;height:14px;background:#f0f0f0"></div>
<div class="t" style="left:844px;top:516.0px;color:#000;">目录读取选项</div>
<svg class="r" style="left:847px;top:537px" width="14" height="14" viewBox="0 0 14 14"><rect x="0.5" y="0.5" width="13" height="13" fill="#fff" stroke="#333"/><path d="M2.5 7L5.5 10L11 3.5" stroke="#333" stroke-width="1.3" fill="none"/></svg>
<div class="t" style="left:864px;top:537.0px;color:#000;">缓存访问过的远程目录(V)</div>
<svg class="r" style="left:847px;top:560px" width="14" height="14" viewBox="0 0 14 14"><rect x="0.5" y="0.5" width="13" height="13" fill="#fff" stroke="#333"/><path d="M2.5 7L5.5 10L11 3.5" stroke="#333" stroke-width="1.3" fill="none"/></svg>
<div class="t" style="left:864px;top:560.0px;color:#000;">缓存目录变化(D)</div>
<svg class="r" style="left:1086px;top:560px" width="14" height="14" viewBox="0 0 14 14"><rect x="0.5" y="0.5" width="13" height="13" fill="#fff" stroke="#333"/><path d="M2.5 7L5.5 10L11 3.5" stroke="#333" stroke-width="1.3" fill="none"/></svg>
<div class="t" style="left:1103px;top:560.0px;color:#000;">永久缓存(P)</div>
<svg class="r" style="left:847px;top:583px" width="14" height="14" viewBox="0 0 14 14"><rect x="0.5" y="0.5" width="13" height="13" fill="#fff" stroke="#bbb"/><path d="M2.5 7L5.5 10L11 3.5" stroke="#bbb" stroke-width="1.3" fill="none"/></svg>
<div class="t" style="left:864px;top:583.0px;color:#a0a0a0;">解析符号链接(N)</div>
<svg class="r" style="left:847px;top:606px" width="14" height="14" viewBox="0 0 14 14"><rect x="0.5" y="0.5" width="13" height="13" fill="#fff" stroke="#bbb"/></svg>
<div class="t" style="left:864px;top:606.0px;color:#a0a0a0;">进入符号链接指向的目录(F)</div>
<div class="r" style="left:688px;top:717px;width:80px;height:23px;background:#e1e1e1;border:1px solid #adadad;box-sizing:border-box"></div>
<div class="t" style="left:700px;top:721.0px;color:#000;">颜色(C)</div>
<svg class="r" style="left:754px;top:727px" width="9" height="4" viewBox="0 0 9 4"><path d="M0 0H9L4.5 4Z" fill="#000"/></svg>
<div class="r" style="left:987px;top:717px;width:73px;height:23px;background:#e1e1e1;border:1px solid #adadad;box-sizing:border-box"></div>
<div class="t" style="left:1011px;top:721.0px;color:#000;">确定</div>
<div class="r" style="left:1072px;top:717px;width:73px;height:23px;background:#e1e1e1;border:1px solid #adadad;box-sizing:border-box"></div>
<div class="t" style="left:1096px;top:721.0px;color:#000;">取消</div>
<div class="r" style="left:1155px;top:717px;width:73px;height:23px;background:#e1e1e1;border:2px solid #0078d7;box-sizing:border-box"></div>
<div class="t" style="left:1171px;top:721.0px;color:#000;">帮助(H)</div>
</body></html>
